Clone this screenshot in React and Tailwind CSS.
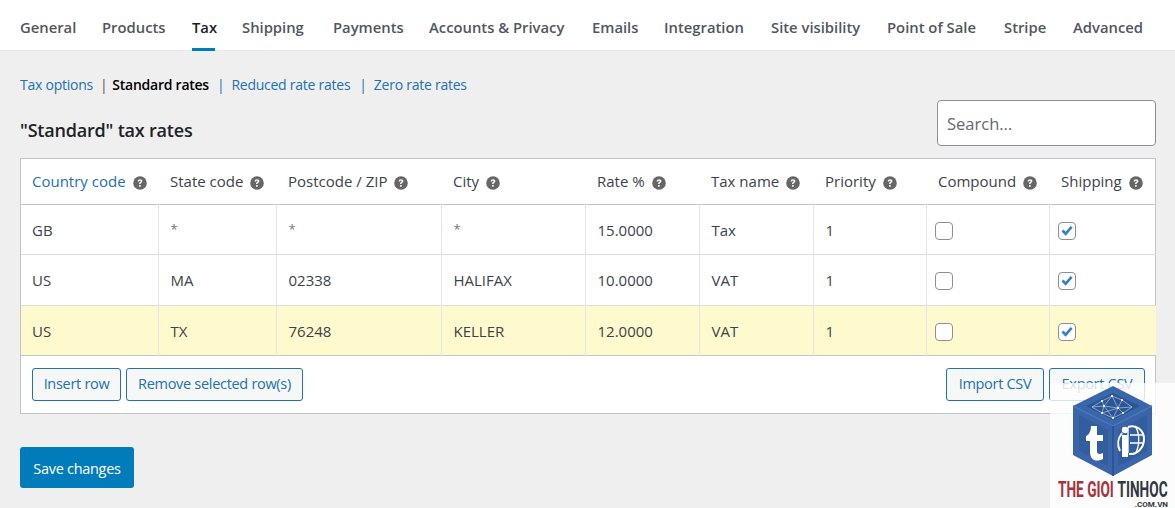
import React from 'react';

const tabs = [
  { label: 'General', width: 'w-[55px]' },
  { label: 'Products', width: 'w-[63px]' },
  { label: 'Tax', width: 'w-[23px]' },
  { label: 'Shipping', width: 'w-[64px]' },
  { label: 'Payments', width: 'w-[69px]' },
  { label: 'Accounts & Privacy', width: 'w-[136px]' },
  { label: 'Emails', width: 'w-[45px]' },
  { label: 'Integration', width: 'w-[80px]' },
  { label: 'Site visibility', width: 'w-[89px]' },
  { label: 'Point of Sale', width: 'w-[90px]' },
  { label: 'Stripe', width: 'w-[42px]' },
  { label: 'Advanced', width: 'w-[70px]' },
];

const columns = [
  { label: 'Country code', width: 'w-[137px]', pad: 'pl-[11px]', link: true },
  { label: 'State code', width: 'w-[118px]', pad: 'pl-[12px]' },
  { label: 'Postcode / ZIP', width: 'w-[165px]', pad: 'pl-[12px]' },
  { label: 'City', width: 'w-[144px]', pad: 'pl-[12px]' },
  { label: 'Rate %', width: 'w-[114px]', pad: 'pl-[12px]' },
  { label: 'Tax name', width: 'w-[114px]', pad: 'pl-[12px]' },
  { label: 'Priority', width: 'w-[113px]', pad: 'pl-[12px]' },
  { label: 'Compound', width: 'w-[123px]', pad: 'pl-[12px]' },
  { label: 'Shipping', width: 'w-[107px]', pad: 'pl-[12px]' },
];

const rows = [
  { cells: ['GB', '*', '*', '*', '15.0000', 'Tax', '1'], height: 'h-[50px]' },
  { cells: ['US', 'MA', '02338', 'HALIFAX', '10.0000', 'VAT', '1'], height: 'h-[51px]' },
  { cells: ['US', 'TX', '76248', 'KELLER', '12.0000', 'VAT', '1'], height: 'h-[50px]', active: true },
];

const HelpIcon = () => (
  <svg viewBox="0 0 14 14" className="w-[14px] h-[14px] shrink-0 mt-[3px]">
    <circle cx="7" cy="7" r="6.8" fill="#666666" />
    <path d="M4.7 5.4c0-1.4 1-2.2 2.4-2.2 1.3 0 2.3.8 2.3 1.9 0 .9-.5 1.3-1.1 1.7-.5.3-.7.5-.7 1v.3H6.1v-.5c0-.8.3-1.2.9-1.6.4-.3.7-.5.7-.8 0-.4-.3-.6-.7-.6-.5 0-.8.3-.8.8H4.7z" fill="#ffffff" />
    <rect x="6.1" y="9" width="1.6" height="1.7" fill="#ffffff" />
  </svg>
);

const Checkbox = ({ checked }) => (
  <span className="flex items-center justify-center w-[18px] h-[18px] rounded-[4px] border border-[#8c8f94] bg-white">
    {checked && (
      <svg viewBox="0 0 16 16" className="w-[16px] h-[16px]">
        <path d="M2.5 8.5l2-2 2.2 2.3L11.6 3l2 1.8-6.9 8z" fill="#3582c4" />
      </svg>
    )}
  </span>
);

const OutlineButton = ({ width, children }) => (
  <button className={`${width} h-[33px] pt-[1px] rounded-[3px] border border-[#2271b1] bg-[#f6f7f7] text-[#2271b1] text-[14.5px] tracking-[-0.3px] leading-none`}>
    {children}
  </button>
);

const networkLines = 'M42 24L52 18L62 13L72 17L82 24M42 24L54 23L68 25L82 24M42 24L52 30L63 35L73 30L82 24M52 18L54 23L52 30M62 13L68 25L63 35M72 17L68 25L73 30M54 23L62 13M54 23L63 35M68 25L52 30';
const networkDots = [[52, 18], [62, 13], [72, 17], [54, 23], [68, 25], [52, 30], [63, 35], [73, 30]];

const Watermark = () => (
  <div className="absolute right-0 bottom-0 w-[125px] h-[125px] bg-white/80">
    <svg viewBox="0 0 125 125" className="absolute inset-0 w-full h-full">
      <path d="M63 3L102 23V72L63 93L23 72V23Z" fill="#3a65a9" />
      <path d="M63 5L100 23L63 42L26 23Z" fill="#3a66ab" />
      <path d="M63 10L90 23L63 37L36 23Z" fill="#2c5596" />
      <path d="M23 23L63 43L102 23" fill="none" stroke="#4a76b8" strokeWidth="1.5" />
      <path d="M63 43V93" stroke="#2d5594" strokeWidth="2" />
      <path d="M29 32L58 47V83L29 68Z" fill="#325e9d" />
      <path d="M97 32L68 47V83L97 68Z" fill="#325e9d" />
      <path d={networkLines} fill="none" stroke="#c8d6ea" strokeWidth="0.6" />
      {networkDots.map(([cx, cy]) => (
        <circle key={`${cx}-${cy}`} cx={cx} cy={cy} r="1" fill="#ffffff" />
      ))}
      <path d="M41 43H47V52H53V58H47V68C47 71 49 72 53 70V76C45 80 40 76 40 69V58H36V53C39 52 41 48 41 43Z" fill="#ffffff" />
      <path d="M78 44C86 41 94 47 94 56C94 65 87 72 79 71" fill="none" stroke="#ffffff" strokeWidth="2" />
      <path d="M80 52H94M80 60H93M85 43C90 50 90 63 85 71M78 44V70" fill="none" stroke="#ffffff" strokeWidth="1.3" />
      <path d="M72 50C68 55 67 62 70 68" fill="none" stroke="#ffffff" strokeWidth="2" />
      <circle cx="75" cy="47" r="3.2" fill="#ffffff" />
      <rect x="72" y="52" width="6" height="22" fill="#ffffff" />
    </svg>
    <div className="absolute left-[8px] top-[97px] flex gap-[6px] text-[22px] leading-[20px] font-bold font-['Roboto',sans-serif] origin-left scale-x-[0.62] whitespace-nowrap">
      <span className="text-[#a6343c]">THE GIOI</span>
      <span className="text-[#2f3840]">TINHOC</span>
    </div>
    <div className="absolute right-[7px] top-[118px] text-[8px] leading-[7px] font-bold text-[#2f3840] font-['Roboto',sans-serif]">.COM.VN</div>
  </div>
);

export default function App() {
  return (
    <div className="relative w-[1175px] h-[508px] overflow-hidden bg-[#efefef] font-['Open_Sans',sans-serif] text-[15px] text-[#3c434a]">
      {/* Tabs */}
      <nav className="flex h-[51px] bg-white pl-[20px] gap-[27px] border-b border-[#e8e8e8]">
        {tabs.map((tab) => (
          <a key={tab.label} className={`${tab.width} flex items-center h-[51px] pt-[6px] border-b-[3px] text-[14.8px] whitespace-nowrap font-[560] ${tab.label === 'Tax' ? 'border-[#007cba] text-[#1e1e1e]' : 'border-transparent text-[#50575e]'}`}>
            {tab.label}
          </a>
        ))}
      </nav>

      <div className="px-[20px]">
        {/* Sub links */}
        <div className="flex items-center h-[20px] mt-[23px] text-[14px] tracking-[-0.25px] text-[#2271b1]">
          <a>Tax options</a>
          <span className="ml-[7px] mr-[5px] text-[#50575e]">|</span>
          <a className="font-semibold text-[#000000]">Standard rates</a>
          <span className="ml-[8px] mr-[7px]">|</span>
          <a>Reduced rate rates</a>
          <span className="ml-[9px] mr-[7px]">|</span>
          <a>Zero rate rates</a>
        </div>

        {/* Heading + search */}
        <div className="flex items-center justify-between mt-[6px] h-[46px]">
          <h2 className="text-[18px] tracking-[-0.2px] font-semibold text-[#1d2327] mt-[14px]">"Standard" tax rates</h2>
          <input placeholder="Search..." className="w-[219px] h-[46px] -mr-px px-[9px] bg-white border border-[#8c8f94] rounded-[4px] text-[16.5px] placeholder:text-[#646970] outline-none" />
        </div>

        {/* Table */}
        <div className="mt-[12px] w-[1136px] bg-white border border-[#c3c4c7]">
          <table className="table-fixed border-collapse w-full">
            <thead>
              <tr className="h-[45px] border-b border-[#c3c4c7]">
                {columns.map((col) => (
                  <th key={col.label} className={`${col.width} ${col.pad} font-normal text-left ${col.link ? 'text-[#2271b1]' : 'text-[#3c434a]'}`}>
                    <span className="flex items-center gap-[7px] whitespace-nowrap">
                      {col.label}
                      <HelpIcon />
                    </span>
                  </th>
                ))}
              </tr>
            </thead>
            <tbody>
              {rows.map((row) => (
                <tr key={row.cells[0] + row.cells[1]} className={`${row.height} border-b border-[#dcdcde] last:border-[#c3c4c7] ${row.active ? 'bg-[#fffacd]' : ''}`}>
                  {row.cells.map((cell, i) => (
                    <td key={i} className={`p-0 pt-[2px] pl-[12px] first:pl-[11px] border-l first:border-l-0 border-[#e4e4e4] ${cell === '*' ? 'text-[#777777] text-[13px]' : ''}`}>
                      {cell}
                    </td>
                  ))}
                  <td className="p-0 pt-[3px] pl-[8px] border-l border-[#e4e4e4]"><Checkbox /></td>
                  <td className="p-0 pt-[3px] pl-[8px] border-l border-[#e4e4e4]"><Checkbox checked /></td>
                </tr>
              ))}
            </tbody>
          </table>
          <div className="flex justify-between h-[57px] pt-[12px] pl-[11px] pr-[10px]">
            <div className="flex gap-[5px]">
              <OutlineButton width="w-[89px]">Insert row</OutlineButton>
              <OutlineButton width="w-[177px]">Remove selected row(s)</OutlineButton>
            </div>
            <div className="flex gap-[5px]">
              <OutlineButton width="w-[98px]">Import CSV</OutlineButton>
              <OutlineButton width="w-[96px]">Export CSV</OutlineButton>
            </div>
          </div>
        </div>

        <button className="mt-[33px] h-[41px] w-[114px] pt-[3px] rounded-[3px] bg-[#007cba] text-white text-[14.5px] tracking-[-0.3px]">Save changes</button>
      </div>

      <Watermark />
    </div>
  );
}
